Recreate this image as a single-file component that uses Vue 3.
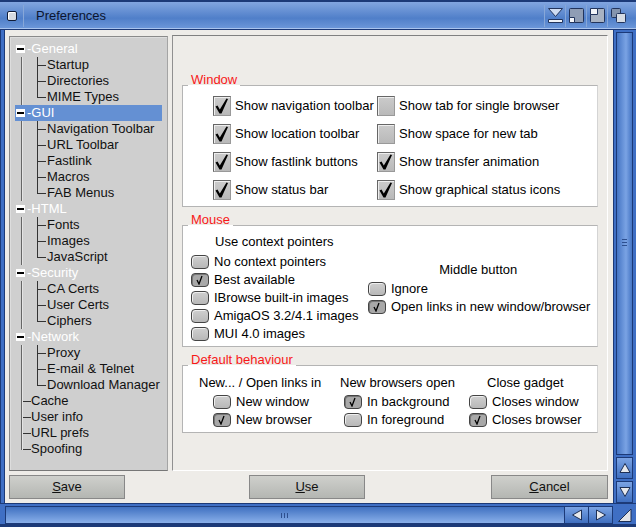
<script setup>
const tree = [
  { t: 'General', k: 'p' }, { t: 'Startup', k: 'c' }, { t: 'Directories', k: 'c' }, { t: 'MIME Types', k: 'c e' },
  { t: 'GUI', k: 'p sel' }, { t: 'Navigation Toolbar', k: 'c' }, { t: 'URL Toolbar', k: 'c' }, { t: 'Fastlink', k: 'c' }, { t: 'Macros', k: 'c' }, { t: 'FAB Menus', k: 'c e' },
  { t: 'HTML', k: 'p' }, { t: 'Fonts', k: 'c' }, { t: 'Images', k: 'c' }, { t: 'JavaScript', k: 'c e' },
  { t: 'Security', k: 'p' }, { t: 'CA Certs', k: 'c' }, { t: 'User Certs', k: 'c' }, { t: 'Ciphers', k: 'c e' },
  { t: 'Network', k: 'p' }, { t: 'Proxy', k: 'c' }, { t: 'E-mail & Telnet', k: 'c' }, { t: 'Download Manager', k: 'c e' },
  { t: 'Cache', k: 'l' }, { t: 'User info', k: 'l' }, { t: 'URL prefs', k: 'l' }, { t: 'Spoofing', k: 'l z' },
]
const win = [
  ['Show navigation toolbar', true, 'Show tab for single browser', false],
  ['Show location toolbar', true, 'Show space for new tab', false],
  ['Show fastlink buttons', true, 'Show transfer animation', true],
  ['Show status bar', true, 'Show graphical status icons', true],
]
const ptr = [['No context pointers', false], ['Best available', true], ['IBrowse built-in images', false], ['AmigaOS 3.2/4.1 images', false], ['MUI 4.0 images', false]]
const mid = [['Ignore', false], ['Open links in new window/browser', true]]
const def = [
  { h: 'New... / Open links in', items: [['New window', false], ['New browser', true]] },
  { h: 'New browsers open', items: [['In background', true], ['In foreground', false]] },
  { h: 'Close gadget', items: [['Closes window', false], ['Closes browser', true]] },
]
</script>

<template>
  <div class="window">
    <header class="title">
      <span class="close"><i></i></span>
      <span class="title-text">Preferences</span>
      <div class="gadgets">
        <span class="gad"><svg width="15" height="15" viewBox="0 0 15 15"><path d="M.5.5h14L7.500 8.500z" fill="#cfdcf2" stroke="#22345c"/><path d="M.5 11.500h14v3H.5z" fill="#eef2f8" stroke="#22345c"/></svg></span>
        <span class="gad"><svg width="15" height="15" viewBox="0 0 15 15"><rect x=".5" y=".5" width="14" height="14" rx="1" fill="#8f9db5" stroke="#22345c"/><path d="M.5 9.500h5v5h-5z" fill="#f2f4f8" stroke="#22345c"/></svg></span>
        <span class="gad"><svg width="15" height="15" viewBox="0 0 15 15"><rect x=".5" y=".5" width="14" height="14" rx="1" fill="#a8b2c2" stroke="#22345c"/><path d="M.5.500h7v6h-7z" fill="#f2f4f8" stroke="#22345c"/></svg></span>
        <span class="gad"><svg width="15" height="15" viewBox="0 0 15 15"><rect x=".5" y=".5" width="9" height="9" rx="1" fill="#8494ae" stroke="#22345c"/><rect x="5.500" y="5.500" width="9" height="9" rx="1" fill="#d5dbe4" stroke="#22345c"/></svg></span>
      </div>
    </header>

    <div class="middle">
      <div class="edge"></div>
      <main class="content">
        <div class="panes">
          <nav class="tree">
            <div v-for="r in tree" :key="r.t" class="row" :class="r.k">
              <span v-if="r.k.startsWith('p')" class="exp"></span>
              <span class="label">{{ r.t }}</span>
            </div>
          </nav>
          <section class="page">
            <div class="group g-window">
              <h3 class="legend">Window</h3>
              <div class="win-grid">
                <template v-for="row in win" :key="row[0]">
                  <label class="big"><span class="cb"><svg v-if="row[1]" width="16" height="18" viewBox="0 0 16 18"><path d="M1.500 9.500L3.500 8.500 5.800 12.500 12.500 1.500 14 2 7.500 16.500H5.500z" fill="#000"/></svg></span>{{ row[0] }}</label>
                  <label class="big"><span class="cb"><svg v-if="row[3]" width="16" height="18" viewBox="0 0 16 18"><path d="M1.500 9.500L3.500 8.500 5.800 12.500 12.500 1.500 14 2 7.500 16.500H5.500z" fill="#000"/></svg></span>{{ row[2] }}</label>
                </template>
              </div>
            </div>

            <div class="group g-mouse">
              <h3 class="legend">Mouse</h3>
              <div class="mouse-cols">
                <div class="mouse-left">
                  <div class="head-left">Use context pointers</div>
                  <label v-for="p in ptr" :key="p[0]" class="small"><span class="rb" :class="{ on: p[1] }"><svg v-if="p[1]" width="8" height="10" viewBox="0 0 8 10"><path d="M1 5l2 4L6 1" fill="none" stroke="#000" stroke-width="1.300"/></svg></span>{{ p[0] }}</label>
                </div>
                <div class="mouse-right">
                  <div class="head-mid">Middle button</div>
                  <label v-for="p in mid" :key="p[0]" class="small"><span class="rb" :class="{ on: p[1] }"><svg v-if="p[1]" width="8" height="10" viewBox="0 0 8 10"><path d="M1 5l2 4L6 1" fill="none" stroke="#000" stroke-width="1.300"/></svg></span>{{ p[0] }}</label>
                </div>
              </div>
            </div>

            <div class="group g-default">
              <h3 class="legend">Default behaviour</h3>
              <div class="def-cols">
                <div v-for="c in def" :key="c.h" class="def-col">
                  <div class="def-head">{{ c.h }}</div>
                  <label v-for="p in c.items" :key="p[0]" class="small"><span class="rb" :class="{ on: p[1] }"><svg v-if="p[1]" width="8" height="10" viewBox="0 0 8 10"><path d="M1 5l2 4L6 1" fill="none" stroke="#000" stroke-width="1.300"/></svg></span>{{ p[0] }}</label>
                </div>
              </div>
            </div>
          </section>
        </div>
        <footer class="buttons">
          <button class="btn"><u>S</u>ave</button>
          <button class="btn"><u>U</u>se</button>
          <button class="btn"><u>C</u>ancel</button>
        </footer>
      </main>
      <aside class="vbar">
        <div class="vtrack"><span class="grip v"></span></div>
        <span class="arrow"><svg width="14" height="14" viewBox="0 0 14 14"><path d="M7 2.500l5 9H2z" fill="#e6e8ec" stroke="#1d2f55"/></svg></span>
        <span class="arrow"><svg width="14" height="14" viewBox="0 0 14 14"><path d="M7 11.500l5-9H2z" fill="#e6e8ec" stroke="#1d2f55"/></svg></span>
      </aside>
    </div>

    <div class="hbar">
      <div class="htrack"><span class="grip h"></span></div>
      <span class="arrow-h"><svg width="14" height="14" viewBox="0 0 14 14"><path d="M2.500 7l9-5v10z" fill="#e6e8ec" stroke="#1d2f55"/></svg></span>
      <span class="arrow-h"><svg width="14" height="14" viewBox="0 0 14 14"><path d="M11.500 7l-9-5v10z" fill="#e6e8ec" stroke="#1d2f55"/></svg></span>
      <span class="size"><svg width="16" height="16" viewBox="0 0 16 16"><path d="M1.500 14.500L14 2v12.500z" fill="#e2e4e8" stroke="#1d2f55"/></svg></span>
    </div>
  </div>
</template>

<style>
html, body { margin: 0; background: #eeece8; }
</style>

<style scoped>
.window {
  width: 636px; height: 527px; display: flex; flex-direction: column; overflow: hidden;
  font: 13px/16px "Liberation Sans", Arial, sans-serif; color: #000; background: #1c3a78;
}
.title {
  height: 30px; box-sizing: border-box; display: flex; align-items: center; flex: none;
  background: linear-gradient(#82a6e0, #507fc9 60%, #6d98da);
  border-top: 2px solid #1c3a78; border-bottom: 1px solid #1c3a78;
  box-shadow: inset 0 -1px #a9c4ee;
}
.close { width: 24px; height: 22px; display: flex; align-items: center; justify-content: flex-end; border-right: 1px solid #87a7d8; box-sizing: border-box; }
.close i { display: block; width: 8px; height: 8px; margin-right: 6px; border: 1px solid #101c38; border-radius: 2px; background: #d7dbe2; box-shadow: inset 1px 1px #fff; }
.title-text { margin-left: 12px; color: #0b1530; }
.gadgets { margin-left: auto; display: flex; margin-right: 8px; }
.gad { width: 20px; height: 22px; display: flex; align-items: center; justify-content: center; border-left: 1px solid #87a7d8; }

.middle { flex: 1; min-height: 0; display: flex; }
.edge { width: 5px; flex: none; background: linear-gradient(90deg, #1c3a78 0 1px, #3f6fc4 1px 4px, #1c3a78 4px); }
.content {
  flex: 1; min-width: 0; box-sizing: border-box; padding: 5px 5px 4px 4px; display: flex; flex-direction: column; gap: 4px;
  background: #eeece8;
}
.panes { flex: 1; min-height: 0; display: flex; gap: 4px; }
.tree {
  width: 159px; box-sizing: border-box; padding-top: 4px; margin-top: 1px; background: #cfcfcf; flex: none;
  border: 1px solid; border-color: #8a8a8a #a4a4a4 #777 #8a8a8a; box-shadow: inset 1px 1px #ddd;
}
.row { position: relative; height: 16px; white-space: nowrap; padding-left: 37px; color: #111; }
.row .label { position: relative; }
.row.p { padding-left: 12px; color: #fff; width: 147px; margin-left: 5px; box-sizing: border-box; }
.row.p .label::before { content: "-"; }
.row.l { padding-left: 16px; margin-left: 5px; }
.row.sel { background: #6490d3; }
.exp { position: absolute; left: 1px; top: 4px; width: 9px; height: 8px; background: #fff; }
.exp::after { content: ""; position: absolute; left: 1px; right: 1px; top: 3px; height: 2px; background: #000; }

.row.c::before { content: ""; position: absolute; left: 27px; top: 0; height: 16px; width: 9px; border-left: 1px solid #333; box-sizing: border-box; background: linear-gradient(#333, #333) no-repeat 0 8px / 9px 1px; }
.row.c.e::before { height: 9px; }
.row.c::after, .row.l::after { content: ""; position: absolute; top: 0; height: 16px; border-left: 1px solid #666; box-shadow: 1px 0 #e4e4e4; }
.row.c::after { left: 11px; }
.row.l::after { left: 6px; }
.row.l .label::before { content: ""; position: absolute; left: -10px; top: 1px; width: 10px; height: 1px; background: #333; transform: translateY(7px); }
.row.l.z::after { height: 9px; }

.page {
  flex: 1; min-width: 0; box-sizing: border-box; padding: 37px 9px 0;
  border-top: 1px solid #808080; border-left: 1px solid #909090; border-bottom: 1px solid #fff; border-right: 1px solid #fff;
}
.group { position: relative; box-sizing: border-box; background: #fff; border: 1px solid; border-color: #b4b4b4 #d4d4d4 #b4b4b4 #b4b4b4; }
.legend { position: absolute; left: 5px; top: -14px; margin: 0; padding: 0 3px; font: inherit; color: #f81818; background: linear-gradient(transparent 13px, #fff 13px); }
.g-window { height: 122px; margin-top: 12px; }
.g-mouse { height: 122px; margin-top: 18px; }
.g-default { height: 68px; margin-top: 18px; }

.win-grid { display: grid; grid-template-columns: 164px 1fr; grid-auto-rows: 28px; padding: 6px 0 0 30px; }
.big { display: flex; align-items: center; gap: 4px; white-space: nowrap; height: 28px; }
.cb { width: 18px; height: 20px; box-sizing: border-box; flex: none; background: linear-gradient(#cbcbcb, #b9b9b9); border: 1px solid; border-color: #666 #999 #999 #666; box-shadow: inset 1px 1px #eee; display: flex; align-items: center; justify-content: center; }

.small { display: flex; align-items: center; gap: 5px; height: 18px; white-space: nowrap; }
.rb { width: 18px; height: 14px; box-sizing: border-box; flex: none; border: 1px solid #444; border-radius: 4px; background: linear-gradient(#cfcfcf, #b8b8b8); display: flex; align-items: center; justify-content: center; box-shadow: inset 1px 1px #eee; }
.rb.on { background: #a8a8a8; box-shadow: inset 1px 1px #777; }

.mouse-cols { display: flex; padding-left: 8px; }
.mouse-left { width: 177px; padding-top: 8px; }
.head-left { padding-left: 24px; height: 18px; margin-bottom: 1px; }
.mouse-right { padding-top: 36px; }
.head-mid { text-align: center; height: 18px; padding-right: 2px; }

.def-cols { display: flex; padding: 9px 0 0 16px; }
.def-col { display: flex; flex-direction: column; }
.def-col:nth-child(1) { width: 141px; }
.def-col:nth-child(2) { width: 129px; }
.def-col:nth-child(1) .small { padding-left: 14px; }
.def-col:nth-child(2) .small { padding-left: 4px; }
.def-col:nth-child(3) .def-head { padding-left: 18px; }
.def-head { height: 18px; white-space: nowrap; }

.buttons { height: 24px; display: flex; flex: none; }
.btn { width: 116px; height: 24px; padding: 0; font: inherit; color: #111; background: linear-gradient(#cfd0cc, #b4b6b2); border: 1px solid; border-color: #ddd #777 #666 #ddd; outline: 1px solid #888; outline-offset: -1px; }
.btn:nth-child(2) { margin-left: 124px; }
.btn:nth-child(3) { margin-left: auto; width: 117px; }

.vbar { width: 23px; flex: none; display: flex; flex-direction: column; box-sizing: border-box; background: #3f6fc4; border-left: 1px solid #1c3a78; padding: 2px 3px 0 2px; gap: 2px; }
.vtrack { flex: 1; display: flex; align-items: center; justify-content: center; background: linear-gradient(90deg, #4575c4, #7aa3e4 60%, #4575c4); border: 1px solid #1c3a78; }
.grip { display: block; }
.grip.v { width: 5px; height: 9px; background: repeating-linear-gradient(#2d4f8f 0 1px, transparent 1px 3px); }
.grip.h { width: 9px; height: 5px; background: repeating-linear-gradient(90deg, #2d4f8f 0 1px, transparent 1px 3px); }
.arrow { height: 22px; box-sizing: border-box; border: 1px solid #1c3a78; display: flex; align-items: center; justify-content: center; background: linear-gradient(#7aa3e4, #3f6fc0); }

.hbar { height: 24px; flex: none; display: flex; background: #3f6fc4; border-top: 1px solid #1c3a78; border-bottom: 3px solid #1c3a78; padding: 2px 0 0; box-sizing: border-box; }
.htrack { flex: 1; display: flex; align-items: center; justify-content: center; background: linear-gradient(#3f70c0, #8ab0ea); margin-left: 5px; border: 1px solid #1c3a78; }
.arrow-h { width: 24px; box-sizing: border-box; border: 1px solid #1c3a78; border-left: 0; display: flex; align-items: center; justify-content: center; background: linear-gradient(#7aa3e4, #3f6fc0); }
.size { width: 23px; display: flex; align-items: center; justify-content: center; background: #3f6fc4; }
</style>
